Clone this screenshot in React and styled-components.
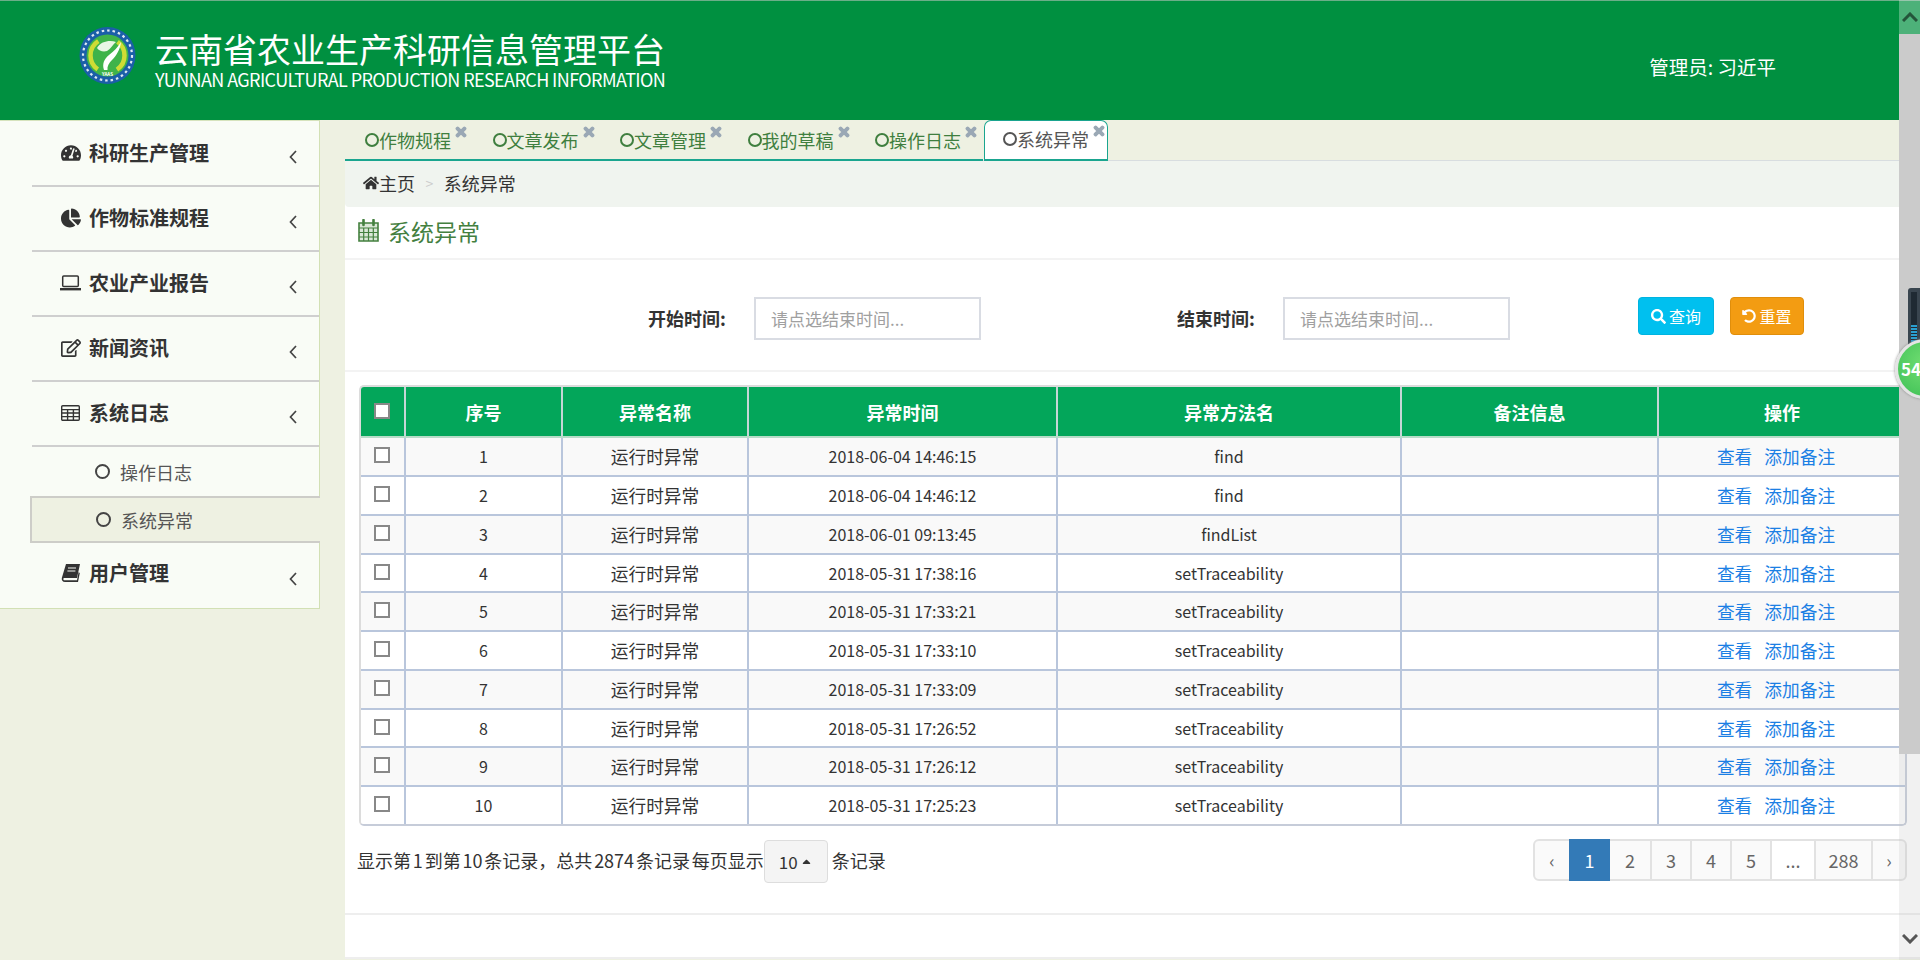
import React from 'react'
import styled, { createGlobalStyle } from 'styled-components'
import {
  FaTachometerAlt, FaChartPie, FaRegEdit, FaHome,
  FaSearch, FaUndoAlt, FaTimes, FaCaretUp,
} from 'react-icons/fa'

const GlobalStyle = createGlobalStyle`
  html, body { margin: 0; padding: 0; }
  body {
    font-family: "Noto Sans CJK SC", "Noto Sans", sans-serif;
    color: #333;
    background: #eef1e2;
  }
  * { box-sizing: border-box; }
`

const Page = styled.div`
  position: relative;
  width: 1920px;
  height: 960px;
  overflow: hidden;
  background: #eef1e2;
`

const Header = styled.header`
  display: flex;
  align-items: flex-start;
  height: 120px;
  padding: 26px 144px 0 79px;
  background: #009040;
  border-top: 1px solid #6cae88;
  color: #fff;
`

const Brand = styled.div`
  display: flex;
  flex-direction: column;
  margin-left: 19px;
  margin-top: 3px;
`

const BrandTitle = styled.div`
  font-size: 34px;
  line-height: 38px;
`

const BrandSub = styled.div`
  font-size: 18px;
  line-height: 22px;
  letter-spacing: -0.6px;
`

const Admin = styled.div`
  margin-left: auto;
  margin-top: 27px;
  font-size: 19.5px;
  line-height: 26px;
`

const Body = styled.div`
  display: flex;
  align-items: flex-start;
`

const Sidebar = styled.nav`
  width: 320px;
  flex: none;
  padding-top: 1px;
  background: #f9fcf6;
  border-top: 1px solid #d6e3bd;
  border-right: 1px solid #d2e0b4;
  border-bottom: 1px solid #d2e0b4;
`

const MenuItem = styled.div`
  display: flex;
  align-items: center;
  height: 65px;
  margin-left: 32px;
  padding: ${p => (p.$last ? '0 22px 6px 28px' : '0 22px 2px 28px')};
  border-bottom: ${p => (p.$last ? 'none' : '2px solid #cfcfcf')};
  font-size: 20px;
  font-weight: 700;
  color: #333;
`

const MenuIcon = styled.span`
  display: flex;
  align-items: center;
  justify-content: center;
  width: 21px;
  height: 21px;
  margin-right: 8px;
  font-size: 20px;
  color: #333;
`

const ChevronMark = styled.svg`
  margin-left: auto;
  margin-top: ${p => (p.$last ? 13 : 9)}px;
  flex: none;
`

const Chevron = ({ last }) => (
  <ChevronMark $last={last} width="8" height="14" viewBox="0 0 8 14" fill="none" stroke="#444" strokeWidth="1.700">
    <path d="M7 1L1.500 7 7 13" />
  </ChevronMark>
)

const SubItem = styled.div`
  display: flex;
  align-items: center;
  gap: 10px;
  height: ${p => (p.$active ? 47 : 49)}px;
  margin-left: ${p => (p.$active ? 30 : 32)}px;
  margin-right: ${p => (p.$active ? -1 : 0)}px;
  padding-left: ${p => (p.$active ? 64 : 63)}px;
  font-size: 18px;
  color: #555;
  background: ${p => (p.$active ? '#eef1e2' : 'transparent')};
  border: ${p => (p.$active ? '2px solid #cdcdc8' : 'none')};
  border-right: none;
  border-bottom: ${p => (p.$active ? '2px solid #cdcdc8' : 'none')};
`

const Ring = styled.span`
  display: inline-block;
  flex: none;
  width: ${p => p.$size || 14}px;
  height: ${p => p.$size || 14}px;
  border: 2.5px solid ${p => p.$color || '#444'};
  border-radius: 50%;
`

const Main = styled.main`
  flex: 1;
  min-width: 0;
`

const TabBar = styled.div`
  display: flex;
  align-items: stretch;
  height: 41px;
  margin-left: 25px;
  border-bottom: 1px solid #d8dde0;
`

const Tabs = styled.div`
  display: flex;
  border-bottom: 2px solid #1aa58f;
  height: 41px;
`

const Tab = styled.div`
  display: flex;
  align-items: center;
  width: ${p => (p.$active ? 124 : 127.5)}px;
  height: 41px;
  padding-left: ${p => (p.$active ? 18 : 20)}px;
  padding-bottom: 2px;
  margin-left: ${p => (p.$active ? '1.5px' : 0)};
  font-size: 18px;
  color: ${p => (p.$active ? '#555' : '#3f7f3f')};
  background: ${p => (p.$active ? '#fff' : 'transparent')};
  border: ${p => (p.$active ? '1px solid #1aa58f' : 'none')};
  border-bottom: ${p => (p.$active ? '2px solid #1aa58f' : 'none')};
  border-radius: 7px 7px 0 0;
  white-space: nowrap;
`

const TabClose = styled(FaTimes)`
  flex: none;
  font-size: 14px;
  margin-left: 3px;
  margin-bottom: 16px;
  color: #9aa8b5;
  stroke: #9aa8b5;
  stroke-width: 50px;
`

const Panel = styled.div`
  margin-left: 25px;
  background: #fff;
`

const Breadcrumb = styled.div`
  display: flex;
  align-items: center;
  height: 46px;
  padding: 0 0 2px 18px;
  font-size: 18px;
  color: #333;
  background: #f0f4ef;
  border-radius: 0 0 0 4px;
`

const CrumbSep = styled.span`
  margin: 0 10.5px;
  font-size: 14px;
  color: #ccc;
`

const Heading = styled.h3`
  display: flex;
  align-items: center;
  gap: 9px;
  height: 53px;
  margin: 0;
  padding: 0 0 4px 13px;
  font-size: 23px;
  font-weight: 400;
  color: #44803f;
  border-bottom: 2px solid #f3f3f3;
`

const Filter = styled.form`
  display: flex;
  align-items: flex-start;
  height: 112px;
  padding: 37px 0 0 303px;
  border-bottom: 2px solid #f3f3f3;
`

const FilterLabel = styled.label`
  width: 77px;
  flex: none;
  margin-left: ${p => p.$gap || 0}px;
  margin-right: 29px;
  font-size: 18px;
  font-weight: 700;
  line-height: 43px;
  white-space: nowrap;
`

const DateInput = styled.input`
  width: 227px;
  height: 43px;
  padding: 0 15px;
  font: 17px "Noto Sans CJK SC", sans-serif;
  border: 2px solid #d9dce3;
  outline: none;

  &::placeholder { color: #a0a0a0; opacity: 1; }
`

const ActionButton = styled.button`
  display: flex;
  align-items: center;
  justify-content: center;
  gap: 3px;
  width: ${p => p.$w}px;
  height: 38px;
  margin-left: ${p => p.$gap}px;
  padding: 0;
  font: 16px "Noto Sans CJK SC", sans-serif;
  color: #fff;
  background: ${p => p.$bg};
  border: 1px solid ${p => p.$edge};
  border-radius: 4px;
`

const TableWrap = styled.div`
  width: 1548px;
  margin: 13px 0 0 14px;
  border: 2px solid #dcdcdc;
  border-bottom-color: #c6ccd9;
  border-right-color: #c6ccd9;
  border-radius: 5px;
  overflow: hidden;
`

const Table = styled.table`
  width: 100%;
  table-layout: fixed;
  border-collapse: collapse;
`

const Col = styled.col`
  width: ${p => p.$w}px;
`

const HeadCell = styled.th`
  height: 50px;
  padding: 0;
  font-size: 18px;
  font-weight: 700;
  color: #fff;
  background: #03a65a;
  border-left: 2px solid #c6d6d6;
  border-bottom: 2px solid #b7dcc8;
  text-align: center;
  vertical-align: middle;
  &:first-child { border-left: none; }
`

const Row = styled.tr`
  height: ${p => p.$h}px;
  background: ${p => (p.$odd ? '#f9f9f9' : '#fff')};
`

const Cell = styled.td`
  padding: 0 0 1px;
  font-size: ${p => (p.$latin ? 16 : 17.7)}px;
  line-height: 26px;
  color: #333;
  text-align: center;
  vertical-align: middle;
  border-left: 2px solid #b9c6dc;
  border-bottom: 2px solid #b9c6dc;
  &:first-child { border-left: none; vertical-align: top; }
  tr:last-child & { border-bottom: none; }
`

const CheckBox = styled.input`
  appearance: none;
  display: block;
  width: 16px;
  height: 16px;
  margin: ${p => (p.$head ? '-2px 0 0 13px' : '9px 0 0 13px')};
  background: #fff;
  border: 2px solid #888;
`

const ActionLink = styled.a`
  margin-right: 12px;
  color: #1b7fe4;
  text-decoration: none;
`

const Pager = styled.div`
  display: flex;
  justify-content: space-between;
  align-items: flex-start;
  width: 1550px;
  height: 45px;
  margin: 13px 0 0 12px;
`

const PagerInfo = styled.div`
  display: flex;
  align-items: center;
  height: 45px;
  padding-bottom: 4px;
  font-size: 18px;
  word-spacing: -2.2px;
  color: #333;
  white-space: nowrap;
`

const SizeButton = styled.div`
  display: flex;
  align-items: center;
  justify-content: center;
  gap: 2px;
  width: 64px;
  height: 43px;
  margin: 4px 4px 0 0;
  font-size: 17px;
  background: #f4f4f4;
  border: 1px solid #ddd;
  border-radius: 4px;
`

const PageList = styled.div`
  display: flex;
  height: 42px;
  font-size: 18px;
  color: #666;
  background: #fafafa;
  border: 2px solid #e2e2e2;
  border-radius: 6px;
`

const PageItem = styled.span`
  display: flex;
  align-items: center;
  justify-content: center;
  width: ${p => p.$w}px;
  margin: ${p => (p.$active ? '-2px 0' : 0)};
  color: ${p => (p.$active ? '#fff' : '#666')};
  background: ${p => (p.$active ? '#337ab7' : p.$plain ? '#fff' : 'transparent')};
  border-left: ${p => (p.$noEdge ? 'none' : '2px solid #e2e2e2')};
`

const PageFoot = styled.div`
  height: 46px;
  margin-top: 29px;
  border-top: 2px solid #eee;
  border-bottom: 2px solid #eee;
`

const Scrollbar = styled.div`
  position: absolute;
  top: 0;
  right: 0;
  display: flex;
  flex-direction: column;
  width: 21px;
  height: 960px;
`

const ScrollUp = styled.div`
  display: flex;
  align-items: center;
  justify-content: center;
  height: 34px;
  background: rgba(255, 255, 255, 0.3);
`

const ScrollThumb = styled.div`
  height: 720px;
  background: #cbcbcb;
`

const ScrollTrack = styled.div`
  flex: 1;
  display: flex;
  align-items: flex-end;
  justify-content: center;
  padding-bottom: 16px;
  background: rgba(190, 190, 190, 0.22);
`

const Meter = styled.div`
  position: absolute;
  top: 288px;
  left: 1908px;
  width: 14px;
  height: 60px;
  padding: 4px 3px;
  background: #39454f;
  border-radius: 3px 0 0 0;
`

const MeterFill = styled.div`
  width: 6px;
  height: 100%;
  background:
    repeating-linear-gradient(transparent 0 2px, #1f2a33 2px 3px),
    linear-gradient(#1f2a33 62%, #2a9fd0 63%, #2a9fd0 100%);
`

const Ball = styled.div`
  position: absolute;
  top: 339px;
  left: 1895px;
  width: 60px;
  height: 60px;
  padding: 14px 0 0 3px;
  font-size: 17px;
  font-weight: 700;
  line-height: 26px;
  color: #fff;
  background: radial-gradient(circle at 50% 40%, #72de72, #3cbf55);
  border: 3px solid #e4e4e4;
  border-radius: 50%;
  box-shadow: 0 0 3px #888;
`

const Logo = () => (
  <svg width="57" height="57" viewBox="0 0 57 57">
    <ellipse cx="28.500" cy="28.500" rx="28" ry="28.500" fill="#1b5fa8" />
    <ellipse cx="28.500" cy="28.500" rx="24.500" ry="25" fill="none" stroke="#dfe9f3" strokeWidth="2.200" strokeDasharray="2.500 3" />
    <circle cx="28.500" cy="28.500" r="21" fill="#3fb34a" />
    <circle cx="28.500" cy="28.500" r="17" fill="none" stroke="#cfdc35" strokeWidth="4.500" strokeDasharray="33 20.400" strokeDashoffset="16.500" />
    <path d="M25 43c-2-6 0-11 5-15 5-4 9-8 12-13-1 8-5 14-9 18-3 3-5 6-4.500 10z" fill="#fff" />
    <path d="M18 21c4-7 13-8 19-6-3 2-5 7-9 9-4 1-8 0-10-3z" fill="#e9f6e4" />
    <text x="28.500" y="49" textAnchor="middle" fontSize="4.500" fontWeight="700" fill="#fff">YAAS</text>
  </svg>
)

const LaptopIcon = () => (
  <svg width="21" height="16" viewBox="0 0 21 16" fill="none" stroke="#333">
    <rect x="2.700" y="1" width="15.600" height="10.500" rx="1" strokeWidth="1.500" />
    <path d="M0 14.200h21" strokeWidth="2.400" />
  </svg>
)

const GridIcon = () => (
  <svg width="19" height="16" viewBox="0 0 19 16" fill="none" stroke="#333" strokeWidth="1.400">
    <rect x="0.700" y="0.700" width="17.600" height="14.600" rx="1" />
    <path d="M0.700 4.600h17.600M0.700 8h17.600M0.700 11.600h17.600M6.600 4.600v10.700M12.400 4.600v10.700" />
  </svg>
)

const BookIcon = () => (
  <svg width="20" height="20" viewBox="0 0 20 20">
    <path d="M5 1h14l-3 14H3.600C2.600 15 2 15.600 2.400 16.400c.3.7 1 .9 1.800.9H16l1.600-8 1.200.8L17 19H4c-2.400 0-3.600-1.800-3.200-4z" fill="#333" />
    <path d="M7 5h8M6.400 8h8" stroke="#f9fcf6" strokeWidth="1.200" />
  </svg>
)

const CalendarIcon = () => (
  <svg width="21" height="23" viewBox="0 0 21 23" fill="none" stroke="#44803f">
    <path d="M1 4h19v18H1z" strokeWidth="1.600" fill="#dbe8d8" />
    <path d="M1 9h19M1 13.500h19M1 18h19M5.700 9v13M10.500 9v13M15.300 9v13" strokeWidth="1.200" />
    <path d="M5.500 1v5M15.500 1v5" strokeWidth="2.600" strokeLinecap="round" />
  </svg>
)

const ScrollArrow = ({ up, color }) => (
  <svg width="16" height="10" viewBox="0 0 16 10" fill="none" stroke={color} strokeWidth="3">
    <path d={up ? 'M1 9l7-7 7 7' : 'M1 1l7 7 7-7'} />
  </svg>
)

const menu = [
  { label: '科研生产管理', icon: <FaTachometerAlt /> },
  { label: '作物标准规程', icon: <FaChartPie /> },
  { label: '农业产业报告', icon: <LaptopIcon /> },
  { label: '新闻资讯', icon: <FaRegEdit /> },
  { label: '系统日志', icon: <GridIcon /> },
]

const tabs = ['作物规程', '文章发布', '文章管理', '我的草稿', '操作日志']

const rows = [
  ['2018-06-04 14:46:15', 'find'],
  ['2018-06-04 14:46:12', 'find'],
  ['2018-06-01 09:13:45', 'findList'],
  ['2018-05-31 17:38:16', 'setTraceability'],
  ['2018-05-31 17:33:21', 'setTraceability'],
  ['2018-05-31 17:33:10', 'setTraceability'],
  ['2018-05-31 17:33:09', 'setTraceability'],
  ['2018-05-31 17:26:52', 'setTraceability'],
  ['2018-05-31 17:26:12', 'setTraceability'],
  ['2018-05-31 17:25:23', 'setTraceability'],
]

// the rows in the shot alternate 39/38 because of rounding
const rowHeights = [39, 39, 39, 38, 39, 39, 39, 38, 39, 38]

const colWidths = [44, 157, 186, 309, 344, 257, 247]
const columns = ['序号', '异常名称', '异常时间', '异常方法名', '备注信息', '操作']

const pages = [
  { label: '‹', w: 34, noEdge: true },
  { label: '1', w: 41, active: true, noEdge: true },
  { label: '2', w: 40, noEdge: true },
  { label: '3', w: 40 },
  { label: '4', w: 40 },
  { label: '5', w: 40 },
  { label: '...', w: 44, plain: true },
  { label: '288', w: 57 },
  { label: '›', w: 34 },
]

const App = () => (
  <Page>
    <GlobalStyle />
    <Header>
      <Logo />
      <Brand>
        <BrandTitle>云南省农业生产科研信息管理平台</BrandTitle>
        <BrandSub>YUNNAN AGRICULTURAL PRODUCTION RESEARCH INFORMATION</BrandSub>
      </Brand>
      <Admin>管理员: 习近平</Admin>
    </Header>
    <Body>
      <Sidebar>
        {menu.map(item => (
          <MenuItem key={item.label}>
            <MenuIcon>{item.icon}</MenuIcon>
            {item.label}
            <Chevron />
          </MenuItem>
        ))}
        <SubItem><Ring $size={15} />操作日志</SubItem>
        <SubItem $active><Ring $size={15} />系统异常</SubItem>
        <MenuItem $last>
          <MenuIcon><BookIcon /></MenuIcon>
          用户管理
          <Chevron last />
        </MenuItem>
      </Sidebar>
      <Main>
        <TabBar>
          <Tabs>
            {tabs.map(t => (
              <Tab key={t}>
                <Ring $color="#3f7f3f" />
                {t}
                <TabClose />
              </Tab>
            ))}
          </Tabs>
          <Tab $active>
            <Ring $color="#555" />
            系统异常
            <TabClose />
          </Tab>
        </TabBar>
        <Panel>
          <Breadcrumb>
            <FaHome size={16} color="#333" />主页
            <CrumbSep>&gt;</CrumbSep>
            系统异常
          </Breadcrumb>
          <Heading><CalendarIcon />系统异常</Heading>
          <Filter>
            <FilterLabel>开始时间:</FilterLabel>
            <DateInput placeholder="请点选结束时间..." />
            <FilterLabel $gap={196}>结束时间:</FilterLabel>
            <DateInput placeholder="请点选结束时间..." />
            <ActionButton type="button" $w={76} $gap={128} $bg="#00c0ef" $edge="#00b4e0">
              <FaSearch size={15} />查询
            </ActionButton>
            <ActionButton type="button" $w={74} $gap={16} $bg="#f39c12" $edge="#e08e0b">
              <FaUndoAlt size={14} />重置
            </ActionButton>
          </Filter>
          <TableWrap>
            <Table>
              <colgroup>
                {colWidths.map((w, i) => <Col key={i} $w={w} />)}
              </colgroup>
              <thead>
                <tr>
                  <HeadCell><CheckBox type="checkbox" $head /></HeadCell>
                  {columns.map(c => <HeadCell key={c}>{c}</HeadCell>)}
                </tr>
              </thead>
              <tbody>
                {rows.map(([time, method], i) => (
                  <Row key={i} $odd={i % 2 === 0} $h={rowHeights[i]}>
                    <Cell><CheckBox type="checkbox" /></Cell>
                    <Cell $latin>{i + 1}</Cell>
                    <Cell>运行时异常</Cell>
                    <Cell $latin>{time}</Cell>
                    <Cell $latin>{method}</Cell>
                    <Cell />
                    <Cell>
                      <ActionLink>查看</ActionLink>
                      <ActionLink>添加备注</ActionLink>
                    </Cell>
                  </Row>
                ))}
              </tbody>
            </Table>
          </TableWrap>
          <Pager>
            <PagerInfo>
              显示第 1 到第 10 条记录，总共 2874 条记录 每页显示
              <SizeButton>10<FaCaretUp size={13} /></SizeButton>
              条记录
            </PagerInfo>
            <PageList>
              {pages.map(p => (
                <PageItem key={p.label} $w={p.w} $active={p.active} $plain={p.plain} $noEdge={p.noEdge}>
                  {p.label}
                </PageItem>
              ))}
            </PageList>
          </Pager>
          <PageFoot />
        </Panel>
      </Main>
    </Body>
    <Scrollbar>
      <ScrollUp><ScrollArrow up color="#24553a" /></ScrollUp>
      <ScrollThumb />
      <ScrollTrack><ScrollArrow color="#555" /></ScrollTrack>
    </Scrollbar>
    <Meter><MeterFill /></Meter>
    <Ball>54</Ball>
  </Page>
)

export default App
